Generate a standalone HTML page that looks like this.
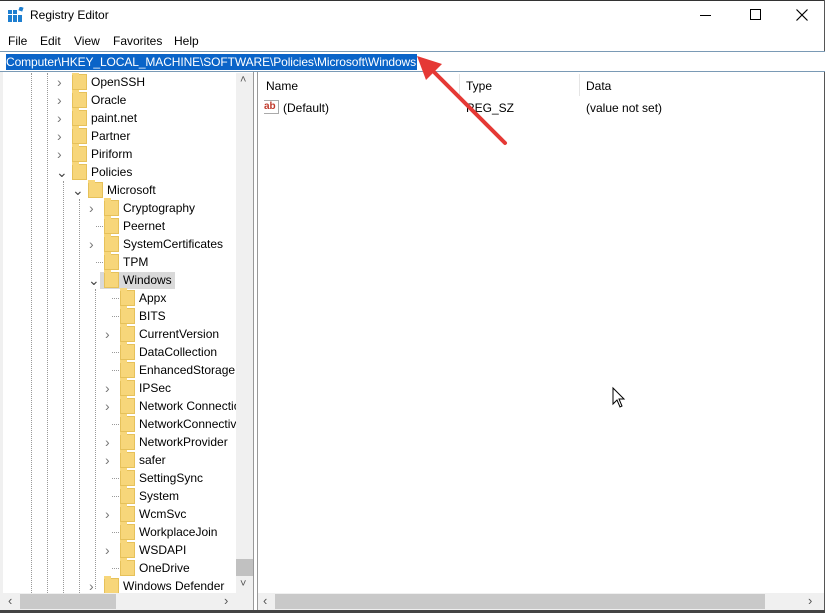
<!DOCTYPE html><html><head><style>
*{margin:0;padding:0;box-sizing:border-box}
body{width:825px;height:613px;background:#fff;font-family:"Liberation Sans",sans-serif;font-size:12px;color:#000;position:relative;overflow:hidden}
.a{position:absolute}
.row{position:absolute;height:18px;line-height:19px;white-space:nowrap}
.fd{position:absolute;width:15px;height:16px;background:#f7d67a;border:1px solid #e6c15a;top:1px}
.fd:before{content:"";position:absolute;left:-1px;top:-3px;width:7px;height:3px;background:#f7d67a}
.ar{position:absolute;color:#777;font-size:14px;top:0}
.vl{position:absolute;border-left:1px dotted #999;top:73px;height:520px}
.hd{position:absolute;border-top:1px dotted #999;width:7px;top:9px}
</style></head><body>
<div class="a" style="left:0;top:0;width:825px;height:1px;background:#333"></div>
<div class="a" style="right:0;top:0;width:1px;height:613px;background:#555"></div>
<svg class="a" style="left:8px;top:7px" width="16" height="16"><g fill="#1e7fd0"><rect x="0" y="3" width="4" height="4"/><rect x="5" y="3" width="4" height="4"/><rect x="0" y="8" width="4" height="4"/><rect x="5" y="8" width="4" height="4"/><rect x="0" y="12" width="4" height="3"/><rect x="5" y="12" width="4" height="3"/><rect x="10" y="8" width="4" height="4"/><rect x="10" y="12" width="4" height="3"/><rect x="11" y="0" width="4" height="4" transform="rotate(20 13 2)"/></g></svg>
<div class="a" style="left:30px;top:8px;font-size:12px">Registry Editor</div>
<div class="a" style="left:700px;top:15px;width:11px;height:1px;background:#000"></div>
<div class="a" style="left:750px;top:9px;width:11px;height:11px;border:1px solid #000"></div>
<svg class="a" style="left:796px;top:9px" width="12" height="12"><path d="M0.5,0.5 L11.5,11.5 M11.5,0.5 L0.5,11.5" stroke="#000" stroke-width="1.2"/></svg>
<div class="a" style="top:34px;left:8px">File</div>
<div class="a" style="top:34px;left:40px">Edit</div>
<div class="a" style="top:34px;left:74px">View</div>
<div class="a" style="top:34px;left:113px">Favorites</div>
<div class="a" style="top:34px;left:174px">Help</div>
<div class="a" style="left:0;top:51px;width:825px;height:21px;border-top:1px solid #7a9ab5;border-bottom:1px solid #7a9ab5;background:#fff"></div>
<div class="a" style="left:6px;top:54px;width:411px;height:16px;background:#0a64c8;color:#fff;line-height:16px;font-size:12px;letter-spacing:-0.1px;white-space:nowrap;overflow:hidden">Computer\HKEY_LOCAL_MACHINE\SOFTWARE\Policies\Microsoft\Windows</div>
<div class="a" style="left:0;top:72px;width:254px;height:541px;border-right:1px solid #999;overflow:hidden">
<div class="a" style="left:0;top:0;width:3px;height:541px;background:#f0f0f0"></div>
</div>
<div class="vl" style="left:31px"></div><div class="vl" style="left:47px"></div>
<div class="vl" style="left:63px;top:181px;height:412px"></div>
<div class="vl" style="left:79px;top:199px;height:394px"></div>
<div class="vl" style="left:95px;top:289px;height:300px"></div>
<div class="a" style="left:0;top:73px;width:236px;height:520px;overflow:hidden">
<div style="position:absolute;left:0;top:-73px;width:236px;height:600px">
<div class="row" style="top:73px"><span class="ar" style="left:57px">›</span><div class="fd" style="left:72px"></div><span class="a" style="left:91px">OpenSSH</span></div>
<div class="row" style="top:91px"><span class="ar" style="left:57px">›</span><div class="fd" style="left:72px"></div><span class="a" style="left:91px">Oracle</span></div>
<div class="row" style="top:109px"><span class="ar" style="left:57px">›</span><div class="fd" style="left:72px"></div><span class="a" style="left:91px">paint.net</span></div>
<div class="row" style="top:127px"><span class="ar" style="left:57px">›</span><div class="fd" style="left:72px"></div><span class="a" style="left:91px">Partner</span></div>
<div class="row" style="top:145px"><span class="ar" style="left:57px">›</span><div class="fd" style="left:72px"></div><span class="a" style="left:91px">Piriform</span></div>
<div class="row" style="top:163px"><span class="ar" style="left:56px;color:#444">⌄</span><div class="fd" style="left:72px"></div><span class="a" style="left:91px">Policies</span></div>
<div class="row" style="top:181px"><span class="ar" style="left:72px;color:#444">⌄</span><div class="fd" style="left:88px"></div><span class="a" style="left:107px">Microsoft</span></div>
<div class="row" style="top:199px"><span class="ar" style="left:89px">›</span><div class="fd" style="left:104px"></div><span class="a" style="left:123px">Cryptography</span></div>
<div class="row" style="top:217px"><div class="hd" style="left:96px"></div><div class="fd" style="left:104px"></div><span class="a" style="left:123px">Peernet</span></div>
<div class="row" style="top:235px"><span class="ar" style="left:89px">›</span><div class="fd" style="left:104px"></div><span class="a" style="left:123px">SystemCertificates</span></div>
<div class="row" style="top:253px"><div class="hd" style="left:96px"></div><div class="fd" style="left:104px"></div><span class="a" style="left:123px">TPM</span></div>
<div class="a" style="left:100px;top:272px;width:75px;height:17px;background:#d9d9d9"></div>
<div class="row" style="top:271px"><span class="ar" style="left:88px;color:#444">⌄</span><div class="fd" style="left:104px"></div><span class="a" style="left:123px">Windows</span></div>
<div class="row" style="top:289px"><div class="hd" style="left:112px"></div><div class="fd" style="left:120px"></div><span class="a" style="left:139px">Appx</span></div>
<div class="row" style="top:307px"><div class="hd" style="left:112px"></div><div class="fd" style="left:120px"></div><span class="a" style="left:139px">BITS</span></div>
<div class="row" style="top:325px"><span class="ar" style="left:105px">›</span><div class="fd" style="left:120px"></div><span class="a" style="left:139px">CurrentVersion</span></div>
<div class="row" style="top:343px"><div class="hd" style="left:112px"></div><div class="fd" style="left:120px"></div><span class="a" style="left:139px">DataCollection</span></div>
<div class="row" style="top:361px"><div class="hd" style="left:112px"></div><div class="fd" style="left:120px"></div><span class="a" style="left:139px">EnhancedStorageDevices</span></div>
<div class="row" style="top:379px"><span class="ar" style="left:105px">›</span><div class="fd" style="left:120px"></div><span class="a" style="left:139px">IPSec</span></div>
<div class="row" style="top:397px"><span class="ar" style="left:105px">›</span><div class="fd" style="left:120px"></div><span class="a" style="left:139px">Network Connections</span></div>
<div class="row" style="top:415px"><div class="hd" style="left:112px"></div><div class="fd" style="left:120px"></div><span class="a" style="left:139px">NetworkConnectivity</span></div>
<div class="row" style="top:433px"><span class="ar" style="left:105px">›</span><div class="fd" style="left:120px"></div><span class="a" style="left:139px">NetworkProvider</span></div>
<div class="row" style="top:451px"><span class="ar" style="left:105px">›</span><div class="fd" style="left:120px"></div><span class="a" style="left:139px">safer</span></div>
<div class="row" style="top:469px"><div class="hd" style="left:112px"></div><div class="fd" style="left:120px"></div><span class="a" style="left:139px">SettingSync</span></div>
<div class="row" style="top:487px"><div class="hd" style="left:112px"></div><div class="fd" style="left:120px"></div><span class="a" style="left:139px">System</span></div>
<div class="row" style="top:505px"><span class="ar" style="left:105px">›</span><div class="fd" style="left:120px"></div><span class="a" style="left:139px">WcmSvc</span></div>
<div class="row" style="top:523px"><div class="hd" style="left:112px"></div><div class="fd" style="left:120px"></div><span class="a" style="left:139px">WorkplaceJoin</span></div>
<div class="row" style="top:541px"><span class="ar" style="left:105px">›</span><div class="fd" style="left:120px"></div><span class="a" style="left:139px">WSDAPI</span></div>
<div class="row" style="top:559px"><div class="hd" style="left:112px"></div><div class="fd" style="left:120px"></div><span class="a" style="left:139px">OneDrive</span></div>
<div class="row" style="top:577px"><span class="ar" style="left:89px">›</span><div class="fd" style="left:104px"></div><span class="a" style="left:123px">Windows Defender</span></div>
</div></div>
<div class="a" style="left:236px;top:73px;width:17px;height:520px;background:#f0f0f0"></div>
<div class="a" style="left:240px;top:74px;font-size:11px;color:#555">˄</div>
<div class="a" style="left:236px;top:559px;width:17px;height:17px;background:#c1c1c1"></div>
<div class="a" style="left:240px;top:578px;font-size:11px;color:#555">˅</div>
<div class="a" style="left:3px;top:593px;width:250px;height:17px;background:#f0f0f0"></div>
<div class="a" style="left:20px;top:594px;width:96px;height:15px;background:#c9c9c9"></div>
<div class="a" style="left:8px;top:593px;font-size:13px;color:#555">‹</div>
<div class="a" style="left:224px;top:593px;font-size:13px;color:#555">›</div>
<div class="a" style="left:0;top:610px;width:825px;height:3px;background:#444"></div>
<div class="a" style="left:257px;top:72px;width:567px;height:538px;border-left:1px solid #999"></div>
<div class="a" style="left:266px;top:79px">Name</div>
<div class="a" style="left:459px;top:74px;width:1px;height:22px;background:#e5e5e5"></div>
<div class="a" style="left:466px;top:79px">Type</div>
<div class="a" style="left:579px;top:74px;width:1px;height:22px;background:#e5e5e5"></div>
<div class="a" style="left:586px;top:79px">Data</div>
<div class="a" style="left:264px;top:100px;width:15px;height:14px;border:1px solid #aaa;border-left:none;color:#c0392b;font-size:10px;font-weight:bold;line-height:11px">ab</div>
<div class="a" style="left:283px;top:101px">(Default)</div>
<div class="a" style="left:466px;top:101px">REG_SZ</div>
<div class="a" style="left:586px;top:101px">(value not set)</div>
<div class="a" style="left:258px;top:593px;width:566px;height:17px;background:#f0f0f0"></div>
<div class="a" style="left:275px;top:594px;width:490px;height:15px;background:#c9c9c9"></div>
<div class="a" style="left:263px;top:593px;font-size:13px;color:#555">‹</div>
<div class="a" style="left:808px;top:593px;font-size:13px;color:#555">›</div>
<svg class="a" style="left:0;top:0" width="825" height="613">
<line x1="505" y1="143" x2="428" y2="66" stroke="#e53935" stroke-width="4" stroke-linecap="round"/>
<polygon points="417,56 442,64 426,80" fill="#e53935"/>
<path d="M613,388 L613,404 L617,400 L620,407 L622,406 L619,399 L624,399 Z" fill="#fff" stroke="#000" stroke-width="1"/>
</svg>
</body></html>
